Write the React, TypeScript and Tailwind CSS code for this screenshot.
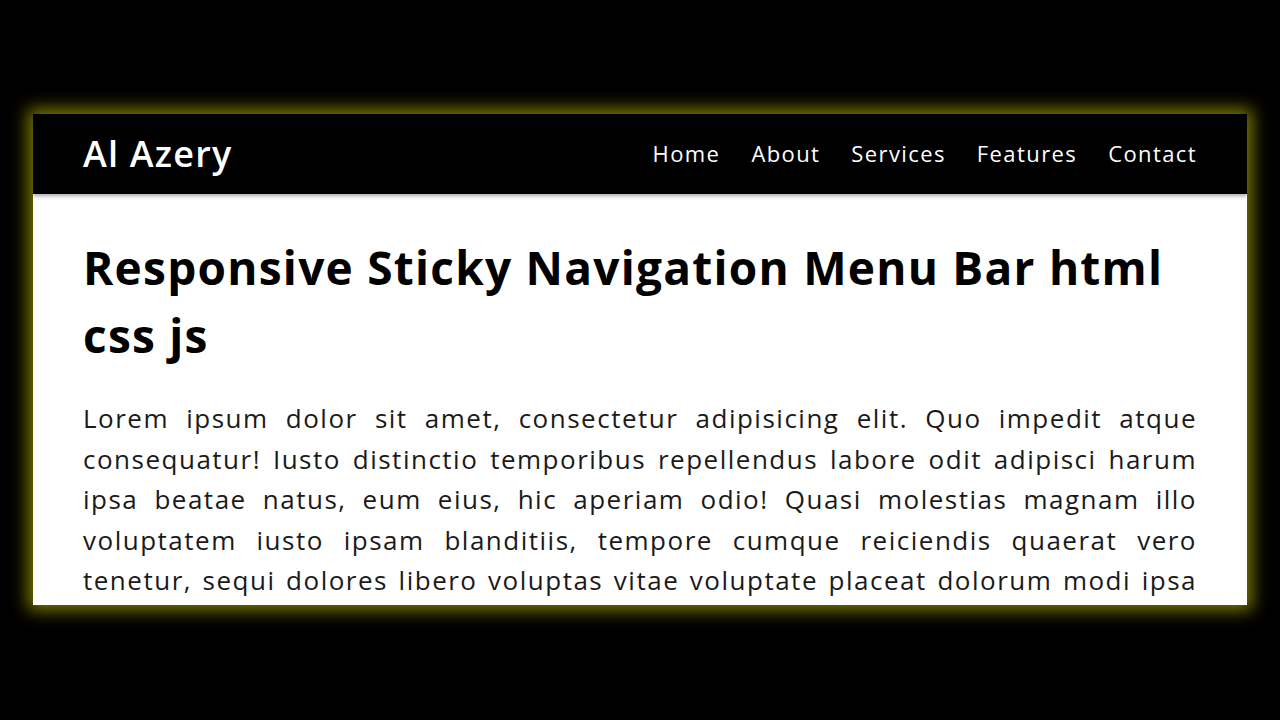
const links = ["Home", "About", "Services", "Features", "Contact"];

const lines = [
  "Lorem ipsum dolor sit amet, consectetur adipisicing elit. Quo impedit atque",
  "consequatur! Iusto distinctio temporibus repellendus labore odit adipisci harum",
  "ipsa beatae natus, eum eius, hic aperiam odio! Quasi molestias magnam illo",
  "voluptatem iusto ipsam blanditiis, tempore cumque reiciendis quaerat vero",
  "tenetur, sequi dolores libero voluptas vitae voluptate placeat dolorum modi ipsa",
];

const App = () => {
  return (
    <div className="min-h-[720px] w-full bg-black pt-[114px] pl-[33px]" style={{ fontFamily: '"Open Sans", "DejaVu Sans", sans-serif' }}>
      <div className="w-[1214px] h-[491px] bg-white overflow-hidden flex flex-col shadow-[0_0_16px_5px_rgba(170,170,0,0.75)]">
        <nav className="h-[80px] shrink-0 bg-black flex items-center justify-between px-[50px] shadow-[0_2px_4px_rgba(0,0,0,0.35)] z-10">
          <a className="text-[36px] font-semibold text-white tracking-[1.2px]">Al Azery</a>
          <ul className="flex items-center gap-[31px] -mt-[2px]">
            {links.map((l) => (
              <li key={l} className="text-[22px] font-medium text-white tracking-[1.4px]">{l}</li>
            ))}
          </ul>
        </nav>
        <main className="px-[50px] pt-[39px]">
          <h1 className="text-[46px] leading-[68px] font-bold text-black tracking-[1.25px]">
            Responsive Sticky Navigation Menu Bar html css js
          </h1>
          <p className="mt-[29px] text-[26px] leading-[40.5px] text-[#1a1a1a] tracking-[1.5px]">
            {lines.map((t) => (
              <span key={t} className="block text-justify [text-align-last:justify]">{t}</span>
            ))}
          </p>
        </main>
      </div>
    </div>
  );
};

export default App;
